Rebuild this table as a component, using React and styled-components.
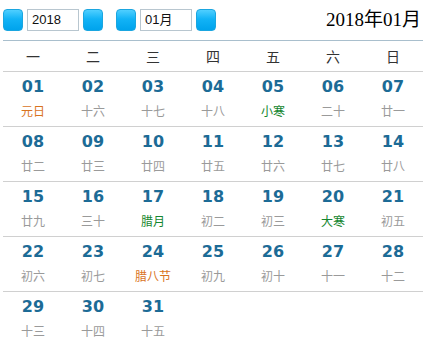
import React from "react";
import styled, { createGlobalStyle } from "styled-components";

const GlobalStyle = createGlobalStyle`
  html, body {
    margin: 0;
    padding: 0;
    background: #ffffff;
  }
`;

const Calendar = styled.div`
  width: 420px;
  margin-left: 3px;
  font-family: "Liberation Sans", "Noto Sans CJK SC", sans-serif;
`;

const Toolbar = styled.div`
  display: flex;
  align-items: center;
  justify-content: space-between;
  height: 40px;
  border-bottom: 1px solid #a9bfcd;
`;

const Controls = styled.div`
  display: flex;
  align-items: center;
`;

const Group = styled.div`
  display: flex;
  align-items: center;
  gap: 4px;
  margin-right: ${(p) => p.gapAfter || "0"};
`;

const NavBtn = styled.div`
  width: 20px;
  height: 22px;
  border-radius: 4px;
  box-sizing: border-box;
  border: 1px solid #1aa6e0;
  background: linear-gradient(180deg, #4fcfff 0%, #12b3f6 45%, #00a3ec 100%);
`;

const Field = styled.div`
  box-sizing: border-box;
  width: ${(p) => p.width || "52px"};
  height: 22px;
  border: 1px solid #b8c6cf;
  padding-left: 4px;
  font-size: 13px;
  line-height: 20px;
  color: #111;
  font-family: "Liberation Sans", "Noto Sans CJK SC", sans-serif;
`;

const Title = styled.div`
  margin-right: 2px;
  font-family: "Liberation Serif", "Noto Sans CJK SC", serif;
  font-size: 19px;
  color: #000;
  line-height: 22px;
`;

const WeekHead = styled.div`
  display: grid;
  grid-template-columns: repeat(7, 60px);
  height: 30px;
  border-bottom: 1px solid #d0d0d0;
`;

const WeekDay = styled.div`
  display: flex;
  align-items: center;
  justify-content: center;
  font-size: 14px;
  color: #333;
  font-family: "Noto Sans CJK SC", sans-serif;
`;

const Week = styled.div`
  display: grid;
  grid-template-columns: repeat(7, 60px);
  height: 54px;
  border-bottom: ${(p) => (p.last ? "none" : "1px solid #d0d0d0")};
`;

const Cell = styled.div`
  display: flex;
  flex-direction: column;
  align-items: center;
  padding-top: 5px;
`;

const DayNum = styled.div`
  font-family: "DejaVu Sans", Verdana, sans-serif;
  font-weight: bold;
  font-size: 16px;
  line-height: 20px;
  color: #1c6b96;
`;

const Lunar = styled.div`
  margin-top: 6px;
  font-family: "Noto Sans CJK SC", sans-serif;
  font-size: 12px;
  line-height: 16px;
  color: ${(p) =>
    p.kind === "festival" ? "#d9731e" : p.kind === "term" ? "#16862f" : "#9a9a9a"};
`;

const weekdays = ["一", "二", "三", "四", "五", "六", "日"];

const days = [
  ["元日", "festival"], ["十六"], ["十七"], ["十八"], ["小寒", "term"], ["二十"], ["廿一"],
  ["廿二"], ["廿三"], ["廿四"], ["廿五"], ["廿六"], ["廿七"], ["廿八"],
  ["廿九"], ["三十"], ["腊月", "term"], ["初二"], ["初三"], ["大寒", "term"], ["初五"],
  ["初六"], ["初七"], ["腊八节", "festival"], ["初九"], ["初十"], ["十一"], ["十二"],
  ["十三"], ["十四"], ["十五"],
];

const weeks = [];
for (let i = 0; i < days.length; i += 7) {
  weeks.push(days.slice(i, i + 7).map((d, j) => ({ n: i + j + 1, lunar: d[0], kind: d[1] })));
}

const App = () => (
  <Calendar>
    <GlobalStyle />
    <Toolbar>
      <Controls>
        <Group gapAfter="13px">
          <NavBtn />
          <Field>2018</Field>
          <NavBtn />
        </Group>
        <Group>
          <NavBtn />
          <Field>01月</Field>
          <NavBtn />
        </Group>
      </Controls>
      <Title>2018年01月</Title>
    </Toolbar>
    <WeekHead>
      {weekdays.map((w) => (
        <WeekDay key={w}>{w}</WeekDay>
      ))}
    </WeekHead>
    {weeks.map((week, wi) => (
      <Week key={wi} last={wi === weeks.length - 1}>
        {week.map((d) => (
          <Cell key={d.n}>
            <DayNum>{String(d.n).padStart(2, "0")}</DayNum>
            <Lunar kind={d.kind}>{d.lunar}</Lunar>
          </Cell>
        ))}
      </Week>
    ))}
  </Calendar>
);

export default App;
